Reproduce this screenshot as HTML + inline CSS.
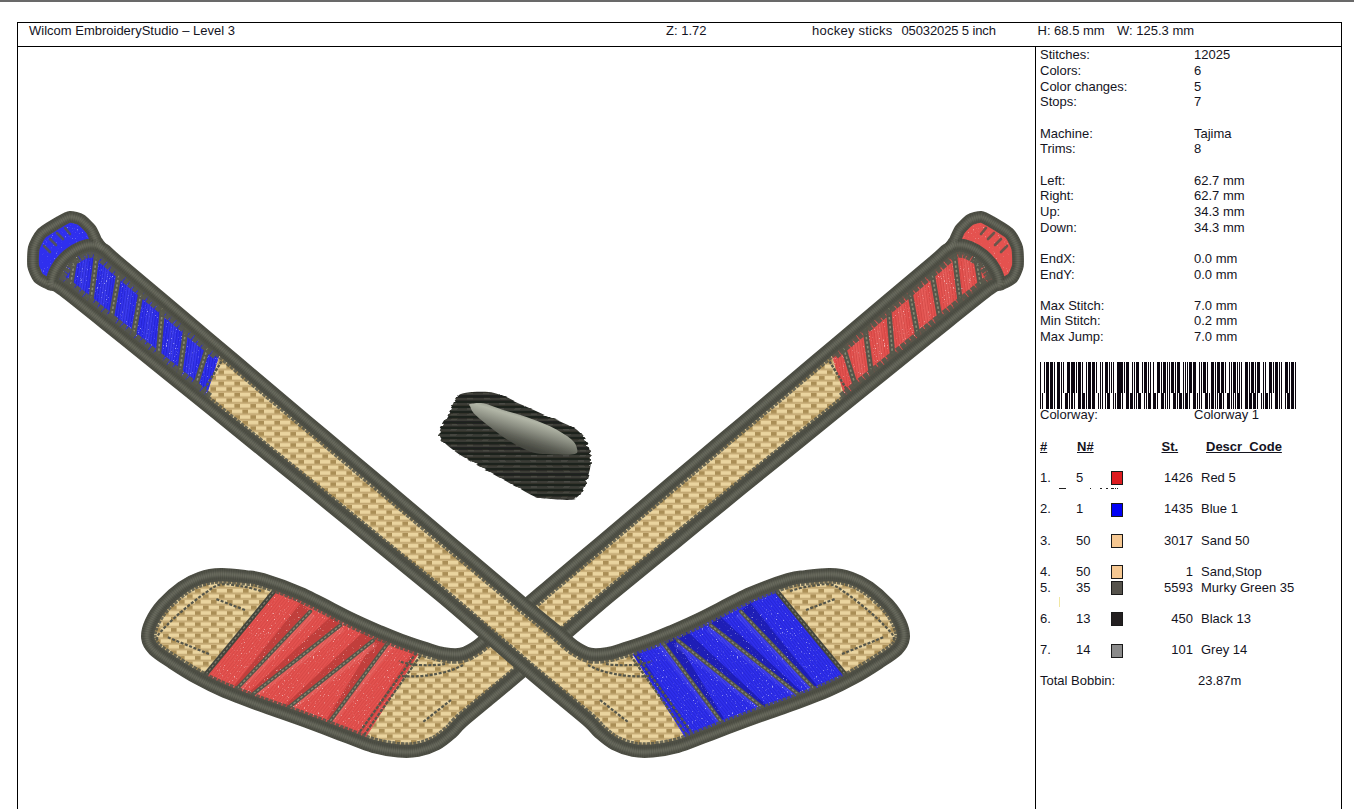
<!DOCTYPE html>
<html><head><meta charset="utf-8"><title>Wilcom EmbroideryStudio worksheet</title>
<style>
html,body{margin:0;padding:0;background:#fff}
body{width:1354px;height:809px;position:relative;overflow:hidden;font-family:"Liberation Sans",sans-serif;font-size:13px;color:#14141e}
.top{position:absolute;left:0;top:0;width:1354px;height:2px;background:#696969}
.ln{position:absolute;background:#000}
.t{position:absolute;white-space:pre;line-height:15px;height:15px}
.h{font-weight:bold;text-decoration:underline}
.sw{position:absolute;width:10px;height:12px;border:1px solid #1a1a1a}
.mk{position:absolute;height:1px;background:#222}
.design{position:absolute;left:17px;top:46px}
.bc{position:absolute;left:1040px;top:362px}
</style></head><body>
<div class="top"></div>
<div class="ln" style="left:17px;top:22px;width:1325px;height:1px"></div>
<div class="ln" style="left:17px;top:46px;width:1325px;height:1px"></div>
<div class="ln" style="left:17px;top:22px;width:1px;height:787px"></div>
<div class="ln" style="left:1341px;top:22px;width:1px;height:787px"></div>
<div class="ln" style="left:1035px;top:46px;width:1px;height:763px"></div>
<div class="t " style="left:29.0px;top:22.5px">Wilcom EmbroideryStudio – Level 3</div>
<div class="t " style="left:666.0px;top:22.5px">Z: 1.72</div>
<div class="t" style="left:812px;top:22.5px;letter-spacing:.24px">hockey sticks</div>
<div class="t" style="left:901.5px;top:22.5px;letter-spacing:-.12px">05032025 5 inch</div>
<div class="t " style="left:1037.5px;top:22.5px">H: 68.5 mm</div>
<div class="t " style="left:1117.0px;top:22.5px">W: 125.3 mm</div>
<svg class="design" width="1018" height="763" viewBox="17 46 1018 763">
<defs>
<pattern id="sand" width="16" height="11.2" patternUnits="userSpaceOnUse">
<rect width="16" height="11.2" fill="#ceb47e"/>
<rect x="0" y=".9" width="10.5" height="3.6" fill="#ead49f"/><rect x="10.5" y=".9" width="5.5" height="3.6" fill="#aa8e56"/>
<rect x="8" y="6.5" width="8" height="3.6" fill="#ead49f"/><rect x="0" y="6.5" width="2.5" height="3.6" fill="#ead49f"/><rect x="2.5" y="6.5" width="5.5" height="3.6" fill="#aa8e56"/>
<rect x="0" y="4.5" width="16" height="1" fill="#c0a56f"/><rect x="0" y="10.1" width="16" height="1" fill="#c0a56f"/>
</pattern>
<filter id="b1" x="-5%" y="-5%" width="110%" height="110%"><feGaussianBlur stdDeviation="1.3"/></filter>
<filter id="b2" x="-20%" y="-20%" width="140%" height="140%"><feGaussianBlur stdDeviation="2"/></filter>
<filter id="speck" x="0" y="0" width="100%" height="100%"><feTurbulence type="fractalNoise" baseFrequency="0.8 0.6" numOctaves="2" seed="4" result="n"/><feColorMatrix in="n" type="matrix" values="0 0 0 0 1  0 0 0 0 1  0 0 0 0 1  4 4 0 0 -4.9" result="m"/><feComposite in="m" in2="SourceGraphic" operator="in"/></filter>
<pattern id="stb" width="2.6" height="8" patternUnits="userSpaceOnUse" patternTransform="rotate(8)"><rect width="1.1" height="8" fill="#1a1ab4"/></pattern>
<pattern id="stbb" width="2.6" height="8" patternUnits="userSpaceOnUse" patternTransform="rotate(-38)"><rect width="1.1" height="8" fill="#1a1ab4"/></pattern>
<pattern id="str" width="2.6" height="8" patternUnits="userSpaceOnUse" patternTransform="rotate(8)"><rect width="1.1" height="8" fill="#c23c3a"/></pattern>
<pattern id="strb" width="2.6" height="8" patternUnits="userSpaceOnUse" patternTransform="rotate(-38)"><rect width="1.1" height="8" fill="#c23c3a"/></pattern>
<filter id="rough" x="-5%" y="-5%" width="110%" height="110%"><feTurbulence type="fractalNoise" baseFrequency="0.015 0.4" numOctaves="1" seed="3" result="t"/><feColorMatrix in="t" type="matrix" values="1 0 0 0 0  0 0 0 0 .5  0 0 0 0 0  0 0 0 0 1" result="t2"/><feDisplacementMap in="SourceGraphic" in2="t2" scale="7" xChannelSelector="R" yChannelSelector="G"/></filter>
<pattern id="pk2" width="16" height="5.2" patternUnits="userSpaceOnUse"><rect width="16" height="5.2" fill="#3a3b35"/><rect y="0" width="16" height="2.6" fill="#1f201c"/><rect x="3" y="2.6" width="6" height="1.4" fill="#4b4c45"/></pattern>
<linearGradient id="pk" gradientUnits="userSpaceOnUse" x1="531" y1="413" x2="521" y2="446"><stop offset="0" stop-color="#8a8e82"/><stop offset=".22" stop-color="#b2b6a7"/><stop offset=".5" stop-color="#8b8e82"/><stop offset=".8" stop-color="#5d5f56"/><stop offset="1" stop-color="#45473f"/></linearGradient>
<filter id="b0" x="-5%" y="-10%" width="110%" height="120%"><feGaussianBlur stdDeviation=".7"/></filter>
</defs>
<g transform="translate(1051,0) scale(-1,1)">
<g>
<clipPath id="clipr"><path d="M117.0 260.5C127.1 269.1 148.9 287.4 164.9 300.8C180.8 314.3 196.8 327.7 212.8 341.2C228.7 354.6 244.7 368.1 260.6 381.5C276.6 395.0 292.5 408.4 308.5 421.9C324.5 435.3 340.4 448.7 356.4 462.2C372.3 475.6 388.3 489.1 404.2 502.5C420.2 516.0 436.2 529.4 452.1 542.9C468.1 556.3 487.9 572.9 500.0 583.2C512.1 593.5 515.6 596.6 525.0 604.5C534.4 612.4 548.3 623.5 556.5 630.3C564.7 637.1 568.4 641.6 574.0 645.5C579.6 649.4 584.5 652.2 590.0 653.5C595.5 654.8 601.2 653.9 607.0 653.0C612.8 652.1 617.8 650.2 625.0 648.0C632.2 645.8 642.5 642.2 650.0 639.5C657.5 636.8 661.7 635.1 670.0 631.5C678.3 627.9 686.7 624.4 700.0 618.0C713.3 611.6 735.3 599.5 750.0 593.0C764.7 586.5 778.8 581.8 788.0 579.0C797.2 576.2 798.0 576.8 805.0 576.0C812.0 575.2 822.3 573.8 830.0 574.0C837.7 574.2 844.4 575.3 851.0 577.5C857.6 579.7 863.2 582.6 869.5 587.0C875.8 591.4 883.3 598.2 888.5 604.0C893.7 609.8 897.9 616.3 900.5 622.0C903.1 627.7 904.5 633.3 904.0 638.0C903.5 642.7 901.7 645.8 897.5 650.0C893.3 654.2 886.3 658.4 879.0 663.2C871.7 668.0 862.2 674.0 853.8 678.6C845.4 683.2 839.1 686.5 828.6 691.0C818.1 695.5 801.5 701.7 790.5 705.8C779.5 709.9 772.7 711.9 762.3 715.6C751.9 719.4 737.9 724.6 728.0 728.3C718.1 732.0 711.3 734.7 703.0 737.8C694.7 740.9 686.4 744.7 678.0 747.0C669.6 749.3 660.0 750.9 652.5 751.6C645.0 752.3 639.4 752.2 633.0 751.0C626.6 749.8 619.7 747.3 614.0 744.3C608.3 741.3 603.2 736.6 599.0 733.0C594.8 729.4 595.2 728.0 589.0 722.5C582.8 717.0 571.0 707.5 562.0 700.0C553.0 692.5 547.4 688.0 535.0 677.5C522.6 667.0 503.3 650.4 487.5 636.8C471.7 623.2 458.8 611.6 440.0 596.0C421.2 580.4 396.7 560.6 375.0 542.9C353.3 525.2 331.2 507.0 310.0 489.8C288.8 472.6 268.7 456.3 248.0 439.6C227.3 422.9 206.7 406.1 186.0 389.4C165.3 372.7 144.4 355.8 124.0 339.4C103.5 323.0 75.3 300.2 63.3 290.9C51.3 281.6 53.2 287.2 52.0 283.5C50.8 279.8 53.6 273.3 56.2 268.5C58.9 263.7 63.7 258.3 67.9 254.7C72.1 251.1 77.2 248.4 81.4 246.7C85.6 245.0 89.2 244.1 93.0 244.5C96.8 244.9 100.0 246.5 104.0 249.2C108.0 251.9 106.9 251.9 117.0 260.5Z"/></clipPath>
<clipPath id="ccapr"><path d="M50.0 284.5C48.9 283.9 40.2 279.9 38.5 278.0C36.8 276.1 33.7 269.0 33.2 266.0C32.7 263.0 33.0 251.2 33.8 248.0C34.6 244.8 38.9 236.2 41.5 233.5C44.1 230.8 57.1 223.2 60.0 221.5C62.9 219.8 67.9 217.0 70.0 216.8C72.1 216.6 78.9 218.5 81.0 219.8C83.1 221.1 89.5 227.5 91.0 229.5C92.5 231.5 95.0 238.2 96.0 240.0C97.0 241.8 100.5 246.3 101.0 247.0Z"/></clipPath>
<path d="M117.0 260.5C127.1 269.1 148.9 287.4 164.9 300.8C180.8 314.3 196.8 327.7 212.8 341.2C228.7 354.6 244.7 368.1 260.6 381.5C276.6 395.0 292.5 408.4 308.5 421.9C324.5 435.3 340.4 448.7 356.4 462.2C372.3 475.6 388.3 489.1 404.2 502.5C420.2 516.0 436.2 529.4 452.1 542.9C468.1 556.3 487.9 572.9 500.0 583.2C512.1 593.5 515.6 596.6 525.0 604.5C534.4 612.4 548.3 623.5 556.5 630.3C564.7 637.1 568.4 641.6 574.0 645.5C579.6 649.4 584.5 652.2 590.0 653.5C595.5 654.8 601.2 653.9 607.0 653.0C612.8 652.1 617.8 650.2 625.0 648.0C632.2 645.8 642.5 642.2 650.0 639.5C657.5 636.8 661.7 635.1 670.0 631.5C678.3 627.9 686.7 624.4 700.0 618.0C713.3 611.6 735.3 599.5 750.0 593.0C764.7 586.5 778.8 581.8 788.0 579.0C797.2 576.2 798.0 576.8 805.0 576.0C812.0 575.2 822.3 573.8 830.0 574.0C837.7 574.2 844.4 575.3 851.0 577.5C857.6 579.7 863.2 582.6 869.5 587.0C875.8 591.4 883.3 598.2 888.5 604.0C893.7 609.8 897.9 616.3 900.5 622.0C903.1 627.7 904.5 633.3 904.0 638.0C903.5 642.7 901.7 645.8 897.5 650.0C893.3 654.2 886.3 658.4 879.0 663.2C871.7 668.0 862.2 674.0 853.8 678.6C845.4 683.2 839.1 686.5 828.6 691.0C818.1 695.5 801.5 701.7 790.5 705.8C779.5 709.9 772.7 711.9 762.3 715.6C751.9 719.4 737.9 724.6 728.0 728.3C718.1 732.0 711.3 734.7 703.0 737.8C694.7 740.9 686.4 744.7 678.0 747.0C669.6 749.3 660.0 750.9 652.5 751.6C645.0 752.3 639.4 752.2 633.0 751.0C626.6 749.8 619.7 747.3 614.0 744.3C608.3 741.3 603.2 736.6 599.0 733.0C594.8 729.4 595.2 728.0 589.0 722.5C582.8 717.0 571.0 707.5 562.0 700.0C553.0 692.5 547.4 688.0 535.0 677.5C522.6 667.0 503.3 650.4 487.5 636.8C471.7 623.2 458.8 611.6 440.0 596.0C421.2 580.4 396.7 560.6 375.0 542.9C353.3 525.2 331.2 507.0 310.0 489.8C288.8 472.6 268.7 456.3 248.0 439.6C227.3 422.9 206.7 406.1 186.0 389.4C165.3 372.7 144.4 355.8 124.0 339.4C103.5 323.0 75.3 300.2 63.3 290.9C51.3 281.6 53.2 287.2 52.0 283.5C50.8 279.8 53.6 273.3 56.2 268.5C58.9 263.7 63.7 258.3 67.9 254.7C72.1 251.1 77.2 248.4 81.4 246.7C85.6 245.0 89.2 244.1 93.0 244.5C96.8 244.9 100.0 246.5 104.0 249.2C108.0 251.9 106.9 251.9 117.0 260.5Z" fill="url(#sand)"/>
<path d="M50.0 284.5C48.9 283.9 40.2 279.9 38.5 278.0C36.8 276.1 33.7 269.0 33.2 266.0C32.7 263.0 33.0 251.2 33.8 248.0C34.6 244.8 38.9 236.2 41.5 233.5C44.1 230.8 57.1 223.2 60.0 221.5C62.9 219.8 67.9 217.0 70.0 216.8C72.1 216.6 78.9 218.5 81.0 219.8C83.1 221.1 89.5 227.5 91.0 229.5C92.5 231.5 95.0 238.2 96.0 240.0C97.0 241.8 100.5 246.3 101.0 247.0Z" fill="#e4524f"/>
<g clip-path="url(#clipr)">
<path d="M52.0 283.5L56.2 268.5L67.9 254.7L81.4 246.7L93.0 244.5L104.0 249.2L117.0 260.5L221.5 348.5L203.9 404.0L63.3 290.9Z" fill="#e4524f"/>
<path d="M632.7 654.2L650.0 639.5L670.0 631.5L700.0 618.0L750.0 593.0L770.9 584.0L847.5 679.0L828.6 691.0L790.5 705.8L762.3 715.6L728.0 728.3L703.0 737.8L688.0 742.0Z" fill="#e4524f"/>
<path d="M86.2 253.5L80.5 294.0" stroke="#f07a76" stroke-width="7" opacity=".35" fill="none" filter="url(#b2)"/>
<path d="M108.2 261.5L101.2 308.0" stroke="#f07a76" stroke-width="7" opacity=".35" fill="none" filter="url(#b2)"/>
<path d="M130.5 280.5L122.5 325.0" stroke="#f07a76" stroke-width="7" opacity=".35" fill="none" filter="url(#b2)"/>
<path d="M152.0 299.0L146.0 344.0" stroke="#f07a76" stroke-width="7" opacity=".35" fill="none" filter="url(#b2)"/>
<path d="M174.2 318.0L169.2 362.5" stroke="#f07a76" stroke-width="7" opacity=".35" fill="none" filter="url(#b2)"/>
<path d="M196.8 338.0L188.0 377.5" stroke="#f07a76" stroke-width="7" opacity=".35" fill="none" filter="url(#b2)"/>
<path d="M662.9 642.9L720.7 720.8L723.9 718.4L673.3 635.2Z" fill="#b83a38" opacity=".8" filter="url(#b0)"/>
<path d="M662.9 642.9L720.7 720.8L716.7 723.8L657.3 647.1Z" fill="#f07a76" opacity=".45" filter="url(#b0)"/>
<path d="M677.9 640.4L763.4 708.2L765.9 705.1L686.0 630.2Z" fill="#b83a38" opacity=".8" filter="url(#b0)"/>
<path d="M677.9 640.4L763.4 708.2L760.3 712.1L673.6 645.9Z" fill="#f07a76" opacity=".45" filter="url(#b0)"/>
<path d="M710.6 625.3L798.5 694.4L801.0 691.3L718.6 615.1Z" fill="#b83a38" opacity=".8" filter="url(#b0)"/>
<path d="M710.6 625.3L798.5 694.4L795.4 698.3L706.3 630.8Z" fill="#f07a76" opacity=".45" filter="url(#b0)"/>
<path d="M740.8 611.5L813.6 688.1L816.5 685.3L750.2 602.5Z" fill="#b83a38" opacity=".8" filter="url(#b0)"/>
<path d="M740.8 611.5L813.6 688.1L810.0 691.5L735.7 616.3Z" fill="#f07a76" opacity=".45" filter="url(#b0)"/>
<path d="M632.7 654.2L688.0 731.0L689.6 729.8L637.6 650.7Z" fill="#b83a38" opacity=".5"/>
<path d="M52.0 283.5L56.2 268.5L67.9 254.7L81.4 246.7L93.0 244.5L104.0 249.2L117.0 260.5L221.5 348.5L203.9 404.0L63.3 290.9Z" fill="url(#str)" opacity=".5"/>
<path d="M632.7 654.2L650.0 639.5L670.0 631.5L700.0 618.0L750.0 593.0L770.9 584.0L847.5 679.0L828.6 691.0L790.5 705.8L762.3 715.6L728.0 728.3L703.0 737.8L688.0 742.0Z" fill="url(#strb)" opacity=".4"/>
<path d="M52.0 283.5L56.2 268.5L67.9 254.7L81.4 246.7L93.0 244.5L104.0 249.2L117.0 260.5L221.5 348.5L203.9 404.0L63.3 290.9Z" fill="#fff" filter="url(#speck)" opacity=".55"/>
<path d="M632.7 654.2L650.0 639.5L670.0 631.5L700.0 618.0L750.0 593.0L770.9 584.0L847.5 679.0L828.6 691.0L790.5 705.8L762.3 715.6L728.0 728.3L703.0 737.8L688.0 742.0Z" fill="#fff" filter="url(#speck)" opacity=".55"/>
<g stroke="#55564a" stroke-width="3.2" fill="none" stroke-linecap="round">
<path d="M75.5 255L70 288" stroke-width="5.4"/>
<path d="M75.5 255L70 288" stroke-width="1.6" stroke="#8a8b74" stroke-dasharray="2.5 2" stroke-linecap="butt"/>
<path d="M97 252L91 300" stroke-width="5.4"/>
<path d="M97 252L91 300" stroke-width="1.6" stroke="#8a8b74" stroke-dasharray="2.5 2" stroke-linecap="butt"/>
<path d="M119.5 271L111.5 316" stroke-width="5.4"/>
<path d="M119.5 271L111.5 316" stroke-width="1.6" stroke="#8a8b74" stroke-dasharray="2.5 2" stroke-linecap="butt"/>
<path d="M141.5 290L133.5 334" stroke-width="5.4"/>
<path d="M141.5 290L133.5 334" stroke-width="1.6" stroke="#8a8b74" stroke-dasharray="2.5 2" stroke-linecap="butt"/>
<path d="M162.5 308L158.5 354" stroke-width="5.4"/>
<path d="M162.5 308L158.5 354" stroke-width="1.6" stroke="#8a8b74" stroke-dasharray="2.5 2" stroke-linecap="butt"/>
<path d="M186 328L180 371" stroke-width="5.4"/>
<path d="M186 328L180 371" stroke-width="1.6" stroke="#8a8b74" stroke-dasharray="2.5 2" stroke-linecap="butt"/>
<path d="M207.5 348L196 384" stroke-width="5.4"/>
<path d="M207.5 348L196 384" stroke-width="1.6" stroke="#8a8b74" stroke-dasharray="2.5 2" stroke-linecap="butt"/>
<path d="M662.9 642.9L720.7 720.8" stroke-width="3.8"/>
<path d="M662.9 642.9L720.7 720.8" stroke-width="1.3" stroke="#8a8b74" stroke-dasharray="2.5 2" stroke-linecap="butt"/>
<path d="M677.9 640.4L763.4 708.2" stroke-width="3.8"/>
<path d="M677.9 640.4L763.4 708.2" stroke-width="1.3" stroke="#8a8b74" stroke-dasharray="2.5 2" stroke-linecap="butt"/>
<path d="M710.6 625.3L798.5 694.4" stroke-width="3.8"/>
<path d="M710.6 625.3L798.5 694.4" stroke-width="1.3" stroke="#8a8b74" stroke-dasharray="2.5 2" stroke-linecap="butt"/>
<path d="M740.8 611.5L813.6 688.1" stroke-width="3.8"/>
<path d="M740.8 611.5L813.6 688.1" stroke-width="1.3" stroke="#8a8b74" stroke-dasharray="2.5 2" stroke-linecap="butt"/>
<path d="M221.5 361.3L203.9 390.2" stroke-width="2.4" stroke-dasharray="3 1.2" stroke-linecap="butt"/>
<path d="M777.5 592L845 674" stroke-width="4.6" stroke="#45463d"/>
<path d="M777.5 592L845 674" stroke-width="1.2" stroke="#7d7e70" stroke-dasharray="2.5 2" stroke-linecap="butt"/>
<path d="M630.5 655.5L687 735" stroke-width="2.2" stroke-dasharray="3.5 1.2" stroke-linecap="butt"/>
<path d="M634.5 652.5L692 733" stroke-width="2.2" stroke-dasharray="3.5 1.2" stroke-linecap="butt"/>
<path d="M790.0 591.0C793.0 590.2 801.3 587.6 808.0 586.5C814.7 585.4 824.0 583.5 830.2 584.5C836.4 585.5 839.0 588.3 845.3 592.6C851.6 596.9 861.4 604.8 867.9 610.2C874.4 615.7 880.0 621.1 884.2 625.3C888.4 629.5 891.4 632.7 893.0 635.3C894.6 637.9 893.5 640.0 893.6 641.0" stroke-width="2.2" stroke-dasharray="3 1.6" stroke-linecap="butt"/>
<path d="M806 610L835 599" stroke-width="2.2" stroke-dasharray="3 1.6" stroke-linecap="butt"/>
<path d="M842 654L884 637" stroke-width="2.2" stroke-dasharray="3 1.6" stroke-linecap="butt"/>
<path d="M588 665C600 672 625 678 650 676" stroke-width="2.2" stroke-dasharray="3 1.6" stroke-linecap="butt"/>
<path d="M600 700L628 722" stroke-width="2.2" stroke-dasharray="3 1.6" stroke-linecap="butt"/>
<path d="M606 664C620 666 640 666 652 661" stroke-width="2.2" stroke-dasharray="3 1.6" stroke-linecap="butt"/>
</g>
<path d="M203.9 404.0C187.0 390.4 81.5 305.4 63.3 290.9C45.1 276.4 52.9 286.2 52.0 283.5C51.1 280.8 54.3 272.0 56.2 268.5C58.1 265.0 64.9 257.3 67.9 254.7C70.9 252.1 78.4 247.9 81.4 246.7C84.4 245.5 90.3 244.2 93.0 244.5C95.7 244.8 101.1 247.3 104.0 249.2C106.9 251.1 102.9 248.6 117.0 260.5C131.1 272.4 209.0 337.9 221.5 348.5" fill="none" stroke="#57584c" stroke-width="26" stroke-dasharray="5 1" opacity=".95"/>
<path d="M117.0 260.5C127.1 269.1 148.9 287.4 164.9 300.8C180.8 314.3 196.8 327.7 212.8 341.2C228.7 354.6 244.7 368.1 260.6 381.5C276.6 395.0 292.5 408.4 308.5 421.9C324.5 435.3 340.4 448.7 356.4 462.2C372.3 475.6 388.3 489.1 404.2 502.5C420.2 516.0 436.2 529.4 452.1 542.9C468.1 556.3 487.9 572.9 500.0 583.2C512.1 593.5 515.6 596.6 525.0 604.5C534.4 612.4 548.3 623.5 556.5 630.3C564.7 637.1 568.4 641.6 574.0 645.5C579.6 649.4 584.5 652.2 590.0 653.5C595.5 654.8 601.2 653.9 607.0 653.0C612.8 652.1 617.8 650.2 625.0 648.0C632.2 645.8 642.5 642.2 650.0 639.5C657.5 636.8 661.7 635.1 670.0 631.5C678.3 627.9 686.7 624.4 700.0 618.0C713.3 611.6 735.3 599.5 750.0 593.0C764.7 586.5 778.8 581.8 788.0 579.0C797.2 576.2 798.0 576.8 805.0 576.0C812.0 575.2 822.3 573.8 830.0 574.0C837.7 574.2 844.4 575.3 851.0 577.5C857.6 579.7 863.2 582.6 869.5 587.0C875.8 591.4 883.3 598.2 888.5 604.0C893.7 609.8 897.9 616.3 900.5 622.0C903.1 627.7 904.5 633.3 904.0 638.0C903.5 642.7 901.7 645.8 897.5 650.0C893.3 654.2 886.3 658.4 879.0 663.2C871.7 668.0 862.2 674.0 853.8 678.6C845.4 683.2 839.1 686.5 828.6 691.0C818.1 695.5 801.5 701.7 790.5 705.8C779.5 709.9 772.7 711.9 762.3 715.6C751.9 719.4 737.9 724.6 728.0 728.3C718.1 732.0 711.3 734.7 703.0 737.8C694.7 740.9 686.4 744.7 678.0 747.0C669.6 749.3 660.0 750.9 652.5 751.6C645.0 752.3 639.4 752.2 633.0 751.0C626.6 749.8 619.7 747.3 614.0 744.3C608.3 741.3 603.2 736.6 599.0 733.0C594.8 729.4 595.2 728.0 589.0 722.5C582.8 717.0 571.0 707.5 562.0 700.0C553.0 692.5 547.4 688.0 535.0 677.5C522.6 667.0 503.3 650.4 487.5 636.8C471.7 623.2 458.8 611.6 440.0 596.0C421.2 580.4 396.7 560.6 375.0 542.9C353.3 525.2 331.2 507.0 310.0 489.8C288.8 472.6 268.7 456.3 248.0 439.6C227.3 422.9 206.7 406.1 186.0 389.4C165.3 372.7 144.4 355.8 124.0 339.4C103.5 323.0 75.3 300.2 63.3 290.9C51.3 281.6 53.2 287.2 52.0 283.5C50.8 279.8 53.6 273.3 56.2 268.5C58.9 263.7 63.7 258.3 67.9 254.7C72.1 251.1 77.2 248.4 81.4 246.7C85.6 245.0 89.2 244.1 93.0 244.5C96.8 244.9 100.0 246.5 104.0 249.2C108.0 251.9 106.9 251.9 117.0 260.5Z" fill="none" stroke="#55564a" stroke-width="19.4" stroke-dasharray="3.6 1.1" opacity=".85"/>
<path d="M117.0 260.5C127.1 269.1 148.9 287.4 164.9 300.8C180.8 314.3 196.8 327.7 212.8 341.2C228.7 354.6 244.7 368.1 260.6 381.5C276.6 395.0 292.5 408.4 308.5 421.9C324.5 435.3 340.4 448.7 356.4 462.2C372.3 475.6 388.3 489.1 404.2 502.5C420.2 516.0 436.2 529.4 452.1 542.9C468.1 556.3 487.9 572.9 500.0 583.2C512.1 593.5 515.6 596.6 525.0 604.5C534.4 612.4 548.3 623.5 556.5 630.3C564.7 637.1 568.4 641.6 574.0 645.5C579.6 649.4 584.5 652.2 590.0 653.5C595.5 654.8 601.2 653.9 607.0 653.0C612.8 652.1 617.8 650.2 625.0 648.0C632.2 645.8 642.5 642.2 650.0 639.5C657.5 636.8 661.7 635.1 670.0 631.5C678.3 627.9 686.7 624.4 700.0 618.0C713.3 611.6 735.3 599.5 750.0 593.0C764.7 586.5 778.8 581.8 788.0 579.0C797.2 576.2 798.0 576.8 805.0 576.0C812.0 575.2 822.3 573.8 830.0 574.0C837.7 574.2 844.4 575.3 851.0 577.5C857.6 579.7 863.2 582.6 869.5 587.0C875.8 591.4 883.3 598.2 888.5 604.0C893.7 609.8 897.9 616.3 900.5 622.0C903.1 627.7 904.5 633.3 904.0 638.0C903.5 642.7 901.7 645.8 897.5 650.0C893.3 654.2 886.3 658.4 879.0 663.2C871.7 668.0 862.2 674.0 853.8 678.6C845.4 683.2 839.1 686.5 828.6 691.0C818.1 695.5 801.5 701.7 790.5 705.8C779.5 709.9 772.7 711.9 762.3 715.6C751.9 719.4 737.9 724.6 728.0 728.3C718.1 732.0 711.3 734.7 703.0 737.8C694.7 740.9 686.4 744.7 678.0 747.0C669.6 749.3 660.0 750.9 652.5 751.6C645.0 752.3 639.4 752.2 633.0 751.0C626.6 749.8 619.7 747.3 614.0 744.3C608.3 741.3 603.2 736.6 599.0 733.0C594.8 729.4 595.2 728.0 589.0 722.5C582.8 717.0 571.0 707.5 562.0 700.0C553.0 692.5 547.4 688.0 535.0 677.5C522.6 667.0 503.3 650.4 487.5 636.8C471.7 623.2 458.8 611.6 440.0 596.0C421.2 580.4 396.7 560.6 375.0 542.9C353.3 525.2 331.2 507.0 310.0 489.8C288.8 472.6 268.7 456.3 248.0 439.6C227.3 422.9 206.7 406.1 186.0 389.4C165.3 372.7 144.4 355.8 124.0 339.4C103.5 323.0 75.3 300.2 63.3 290.9C51.3 281.6 53.2 287.2 52.0 283.5C50.8 279.8 53.6 273.3 56.2 268.5C58.9 263.7 63.7 258.3 67.9 254.7C72.1 251.1 77.2 248.4 81.4 246.7C85.6 245.0 89.2 244.1 93.0 244.5C96.8 244.9 100.0 246.5 104.0 249.2C108.0 251.9 106.9 251.9 117.0 260.5Z" fill="none" stroke="#4f5046" stroke-width="14.4"/>
<path d="M212.0 411.5C218.0 416.2 231.7 426.6 248.0 439.6C264.3 452.7 288.8 472.6 310.0 489.8C331.2 507.0 353.3 525.2 375.0 542.9C396.7 560.6 421.2 580.4 440.0 596.0C458.8 611.6 471.7 623.2 487.5 636.8C503.3 650.4 522.6 667.0 535.0 677.5C547.4 688.0 553.0 692.5 562.0 700.0C571.0 707.5 584.5 718.8 589.0 722.5" fill="none" stroke="#4f5046" stroke-width="15.8"/>
</g>
<g clip-path="url(#ccapr)"><path d="M50.0 284.5C48.9 283.9 40.2 279.9 38.5 278.0C36.8 276.1 33.7 269.0 33.2 266.0C32.7 263.0 33.0 251.2 33.8 248.0C34.6 244.8 38.9 236.2 41.5 233.5C44.1 230.8 57.1 223.2 60.0 221.5C62.9 219.8 67.9 217.0 70.0 216.8C72.1 216.6 78.9 218.5 81.0 219.8C83.1 221.1 89.5 227.5 91.0 229.5C92.5 231.5 95.0 238.2 96.0 240.0C97.0 241.8 100.5 246.3 101.0 247.0Z" fill="#fff" filter="url(#speck)" opacity=".4"/>
<path d="M44 246L50 252M50 239L56 245M57 233L63 239M65 228L70 234" stroke="#55564a" stroke-width="2.6" stroke-linecap="round" opacity=".85"/></g>
<path d="M50.0 284.5C48.9 283.9 40.2 279.9 38.5 278.0C36.8 276.1 33.7 269.0 33.2 266.0C32.7 263.0 33.0 251.2 33.8 248.0C34.6 244.8 38.9 236.2 41.5 233.5C44.1 230.8 57.1 223.2 60.0 221.5C62.9 219.8 67.9 217.0 70.0 216.8C72.1 216.6 78.9 218.5 81.0 219.8C83.1 221.1 89.5 227.5 91.0 229.5C92.5 231.5 95.0 238.2 96.0 240.0C97.0 241.8 100.5 246.3 101.0 247.0" fill="none" stroke="#4f5046" stroke-width="11.8" stroke-linejoin="round" stroke-linecap="round"/>
<path d="M117.0 260.5C127.1 269.1 148.9 287.4 164.9 300.8C180.8 314.3 196.8 327.7 212.8 341.2C228.7 354.6 244.7 368.1 260.6 381.5C276.6 395.0 292.5 408.4 308.5 421.9C324.5 435.3 340.4 448.7 356.4 462.2C372.3 475.6 388.3 489.1 404.2 502.5C420.2 516.0 436.2 529.4 452.1 542.9C468.1 556.3 487.9 572.9 500.0 583.2C512.1 593.5 515.6 596.6 525.0 604.5C534.4 612.4 548.3 623.5 556.5 630.3C564.7 637.1 568.4 641.6 574.0 645.5C579.6 649.4 584.5 652.2 590.0 653.5C595.5 654.8 601.2 653.9 607.0 653.0C612.8 652.1 617.8 650.2 625.0 648.0C632.2 645.8 642.5 642.2 650.0 639.5C657.5 636.8 661.7 635.1 670.0 631.5C678.3 627.9 686.7 624.4 700.0 618.0C713.3 611.6 735.3 599.5 750.0 593.0C764.7 586.5 778.8 581.8 788.0 579.0C797.2 576.2 798.0 576.8 805.0 576.0C812.0 575.2 822.3 573.8 830.0 574.0C837.7 574.2 844.4 575.3 851.0 577.5C857.6 579.7 863.2 582.6 869.5 587.0C875.8 591.4 883.3 598.2 888.5 604.0C893.7 609.8 897.9 616.3 900.5 622.0C903.1 627.7 904.5 633.3 904.0 638.0C903.5 642.7 901.7 645.8 897.5 650.0C893.3 654.2 886.3 658.4 879.0 663.2C871.7 668.0 862.2 674.0 853.8 678.6C845.4 683.2 839.1 686.5 828.6 691.0C818.1 695.5 801.5 701.7 790.5 705.8C779.5 709.9 772.7 711.9 762.3 715.6C751.9 719.4 737.9 724.6 728.0 728.3C718.1 732.0 711.3 734.7 703.0 737.8C694.7 740.9 686.4 744.7 678.0 747.0C669.6 749.3 660.0 750.9 652.5 751.6C645.0 752.3 639.4 752.2 633.0 751.0C626.6 749.8 619.7 747.3 614.0 744.3C608.3 741.3 603.2 736.6 599.0 733.0C594.8 729.4 595.2 728.0 589.0 722.5C582.8 717.0 571.0 707.5 562.0 700.0C553.0 692.5 547.4 688.0 535.0 677.5C522.6 667.0 503.3 650.4 487.5 636.8C471.7 623.2 458.8 611.6 440.0 596.0C421.2 580.4 396.7 560.6 375.0 542.9C353.3 525.2 331.2 507.0 310.0 489.8C288.8 472.6 268.7 456.3 248.0 439.6C227.3 422.9 206.7 406.1 186.0 389.4C165.3 372.7 144.4 355.8 124.0 339.4C103.5 323.0 75.3 300.2 63.3 290.9C51.3 281.6 53.2 287.2 52.0 283.5C50.8 279.8 53.6 273.3 56.2 268.5C58.9 263.7 63.7 258.3 67.9 254.7C72.1 251.1 77.2 248.4 81.4 246.7C85.6 245.0 89.2 244.1 93.0 244.5C96.8 244.9 100.0 246.5 104.0 249.2C108.0 251.9 106.9 251.9 117.0 260.5Z" fill="none" stroke="#4f5046" stroke-width="11.8" stroke-linejoin="round" stroke-linecap="round"/>
<path d="M50.0 284.5C48.9 283.9 40.2 279.9 38.5 278.0C36.8 276.1 33.7 269.0 33.2 266.0C32.7 263.0 33.0 251.2 33.8 248.0C34.6 244.8 38.9 236.2 41.5 233.5C44.1 230.8 57.1 223.2 60.0 221.5C62.9 219.8 67.9 217.0 70.0 216.8C72.1 216.6 78.9 218.5 81.0 219.8C83.1 221.1 89.5 227.5 91.0 229.5C92.5 231.5 95.0 238.2 96.0 240.0C97.0 241.8 100.5 246.3 101.0 247.0" fill="none" stroke="#737468" stroke-width="4.5" stroke-linejoin="round" stroke-linecap="round" opacity=".75" filter="url(#b1)"/>
<path d="M50.0 284.5C48.9 283.9 40.2 279.9 38.5 278.0C36.8 276.1 33.7 269.0 33.2 266.0C32.7 263.0 33.0 251.2 33.8 248.0C34.6 244.8 38.9 236.2 41.5 233.5C44.1 230.8 57.1 223.2 60.0 221.5C62.9 219.8 67.9 217.0 70.0 216.8C72.1 216.6 78.9 218.5 81.0 219.8C83.1 221.1 89.5 227.5 91.0 229.5C92.5 231.5 95.0 238.2 96.0 240.0C97.0 241.8 100.5 246.3 101.0 247.0" fill="none" stroke="#2f3029" stroke-width="10.8" stroke-dasharray=".8 1.4" opacity=".22"/>
<path d="M117.0 260.5C127.1 269.1 148.9 287.4 164.9 300.8C180.8 314.3 196.8 327.7 212.8 341.2C228.7 354.6 244.7 368.1 260.6 381.5C276.6 395.0 292.5 408.4 308.5 421.9C324.5 435.3 340.4 448.7 356.4 462.2C372.3 475.6 388.3 489.1 404.2 502.5C420.2 516.0 436.2 529.4 452.1 542.9C468.1 556.3 487.9 572.9 500.0 583.2C512.1 593.5 515.6 596.6 525.0 604.5C534.4 612.4 548.3 623.5 556.5 630.3C564.7 637.1 568.4 641.6 574.0 645.5C579.6 649.4 584.5 652.2 590.0 653.5C595.5 654.8 601.2 653.9 607.0 653.0C612.8 652.1 617.8 650.2 625.0 648.0C632.2 645.8 642.5 642.2 650.0 639.5C657.5 636.8 661.7 635.1 670.0 631.5C678.3 627.9 686.7 624.4 700.0 618.0C713.3 611.6 735.3 599.5 750.0 593.0C764.7 586.5 778.8 581.8 788.0 579.0C797.2 576.2 798.0 576.8 805.0 576.0C812.0 575.2 822.3 573.8 830.0 574.0C837.7 574.2 844.4 575.3 851.0 577.5C857.6 579.7 863.2 582.6 869.5 587.0C875.8 591.4 883.3 598.2 888.5 604.0C893.7 609.8 897.9 616.3 900.5 622.0C903.1 627.7 904.5 633.3 904.0 638.0C903.5 642.7 901.7 645.8 897.5 650.0C893.3 654.2 886.3 658.4 879.0 663.2C871.7 668.0 862.2 674.0 853.8 678.6C845.4 683.2 839.1 686.5 828.6 691.0C818.1 695.5 801.5 701.7 790.5 705.8C779.5 709.9 772.7 711.9 762.3 715.6C751.9 719.4 737.9 724.6 728.0 728.3C718.1 732.0 711.3 734.7 703.0 737.8C694.7 740.9 686.4 744.7 678.0 747.0C669.6 749.3 660.0 750.9 652.5 751.6C645.0 752.3 639.4 752.2 633.0 751.0C626.6 749.8 619.7 747.3 614.0 744.3C608.3 741.3 603.2 736.6 599.0 733.0C594.8 729.4 595.2 728.0 589.0 722.5C582.8 717.0 571.0 707.5 562.0 700.0C553.0 692.5 547.4 688.0 535.0 677.5C522.6 667.0 503.3 650.4 487.5 636.8C471.7 623.2 458.8 611.6 440.0 596.0C421.2 580.4 396.7 560.6 375.0 542.9C353.3 525.2 331.2 507.0 310.0 489.8C288.8 472.6 268.7 456.3 248.0 439.6C227.3 422.9 206.7 406.1 186.0 389.4C165.3 372.7 144.4 355.8 124.0 339.4C103.5 323.0 75.3 300.2 63.3 290.9C51.3 281.6 53.2 287.2 52.0 283.5C50.8 279.8 53.6 273.3 56.2 268.5C58.9 263.7 63.7 258.3 67.9 254.7C72.1 251.1 77.2 248.4 81.4 246.7C85.6 245.0 89.2 244.1 93.0 244.5C96.8 244.9 100.0 246.5 104.0 249.2C108.0 251.9 106.9 251.9 117.0 260.5Z" fill="none" stroke="#737468" stroke-width="4.5" stroke-linejoin="round" stroke-linecap="round" opacity=".75" filter="url(#b1)"/>
<path d="M117.0 260.5C127.1 269.1 148.9 287.4 164.9 300.8C180.8 314.3 196.8 327.7 212.8 341.2C228.7 354.6 244.7 368.1 260.6 381.5C276.6 395.0 292.5 408.4 308.5 421.9C324.5 435.3 340.4 448.7 356.4 462.2C372.3 475.6 388.3 489.1 404.2 502.5C420.2 516.0 436.2 529.4 452.1 542.9C468.1 556.3 487.9 572.9 500.0 583.2C512.1 593.5 515.6 596.6 525.0 604.5C534.4 612.4 548.3 623.5 556.5 630.3C564.7 637.1 568.4 641.6 574.0 645.5C579.6 649.4 584.5 652.2 590.0 653.5C595.5 654.8 601.2 653.9 607.0 653.0C612.8 652.1 617.8 650.2 625.0 648.0C632.2 645.8 642.5 642.2 650.0 639.5C657.5 636.8 661.7 635.1 670.0 631.5C678.3 627.9 686.7 624.4 700.0 618.0C713.3 611.6 735.3 599.5 750.0 593.0C764.7 586.5 778.8 581.8 788.0 579.0C797.2 576.2 798.0 576.8 805.0 576.0C812.0 575.2 822.3 573.8 830.0 574.0C837.7 574.2 844.4 575.3 851.0 577.5C857.6 579.7 863.2 582.6 869.5 587.0C875.8 591.4 883.3 598.2 888.5 604.0C893.7 609.8 897.9 616.3 900.5 622.0C903.1 627.7 904.5 633.3 904.0 638.0C903.5 642.7 901.7 645.8 897.5 650.0C893.3 654.2 886.3 658.4 879.0 663.2C871.7 668.0 862.2 674.0 853.8 678.6C845.4 683.2 839.1 686.5 828.6 691.0C818.1 695.5 801.5 701.7 790.5 705.8C779.5 709.9 772.7 711.9 762.3 715.6C751.9 719.4 737.9 724.6 728.0 728.3C718.1 732.0 711.3 734.7 703.0 737.8C694.7 740.9 686.4 744.7 678.0 747.0C669.6 749.3 660.0 750.9 652.5 751.6C645.0 752.3 639.4 752.2 633.0 751.0C626.6 749.8 619.7 747.3 614.0 744.3C608.3 741.3 603.2 736.6 599.0 733.0C594.8 729.4 595.2 728.0 589.0 722.5C582.8 717.0 571.0 707.5 562.0 700.0C553.0 692.5 547.4 688.0 535.0 677.5C522.6 667.0 503.3 650.4 487.5 636.8C471.7 623.2 458.8 611.6 440.0 596.0C421.2 580.4 396.7 560.6 375.0 542.9C353.3 525.2 331.2 507.0 310.0 489.8C288.8 472.6 268.7 456.3 248.0 439.6C227.3 422.9 206.7 406.1 186.0 389.4C165.3 372.7 144.4 355.8 124.0 339.4C103.5 323.0 75.3 300.2 63.3 290.9C51.3 281.6 53.2 287.2 52.0 283.5C50.8 279.8 53.6 273.3 56.2 268.5C58.9 263.7 63.7 258.3 67.9 254.7C72.1 251.1 77.2 248.4 81.4 246.7C85.6 245.0 89.2 244.1 93.0 244.5C96.8 244.9 100.0 246.5 104.0 249.2C108.0 251.9 106.9 251.9 117.0 260.5Z" fill="none" stroke="#2f3029" stroke-width="10.8" stroke-dasharray=".8 1.4" opacity=".22"/>
</g>
</g>
<g>
<clipPath id="clipb"><path d="M117.0 260.5C127.1 269.1 148.9 287.4 164.9 300.8C180.8 314.3 196.8 327.7 212.8 341.2C228.7 354.6 244.7 368.1 260.6 381.5C276.6 395.0 292.5 408.4 308.5 421.9C324.5 435.3 340.4 448.7 356.4 462.2C372.3 475.6 388.3 489.1 404.2 502.5C420.2 516.0 436.2 529.4 452.1 542.9C468.1 556.3 487.9 572.9 500.0 583.2C512.1 593.5 515.6 596.6 525.0 604.5C534.4 612.4 548.3 623.5 556.5 630.3C564.7 637.1 568.4 641.6 574.0 645.5C579.6 649.4 584.5 652.2 590.0 653.5C595.5 654.8 601.2 653.9 607.0 653.0C612.8 652.1 617.8 650.2 625.0 648.0C632.2 645.8 642.5 642.2 650.0 639.5C657.5 636.8 661.7 635.1 670.0 631.5C678.3 627.9 686.7 624.4 700.0 618.0C713.3 611.6 735.3 599.5 750.0 593.0C764.7 586.5 778.8 581.8 788.0 579.0C797.2 576.2 798.0 576.8 805.0 576.0C812.0 575.2 822.3 573.8 830.0 574.0C837.7 574.2 844.4 575.3 851.0 577.5C857.6 579.7 863.2 582.6 869.5 587.0C875.8 591.4 883.3 598.2 888.5 604.0C893.7 609.8 897.9 616.3 900.5 622.0C903.1 627.7 904.5 633.3 904.0 638.0C903.5 642.7 901.7 645.8 897.5 650.0C893.3 654.2 886.3 658.4 879.0 663.2C871.7 668.0 862.2 674.0 853.8 678.6C845.4 683.2 839.1 686.5 828.6 691.0C818.1 695.5 801.5 701.7 790.5 705.8C779.5 709.9 772.7 711.9 762.3 715.6C751.9 719.4 737.9 724.6 728.0 728.3C718.1 732.0 711.3 734.7 703.0 737.8C694.7 740.9 686.4 744.7 678.0 747.0C669.6 749.3 660.0 750.9 652.5 751.6C645.0 752.3 639.4 752.2 633.0 751.0C626.6 749.8 619.7 747.3 614.0 744.3C608.3 741.3 603.2 736.6 599.0 733.0C594.8 729.4 595.2 728.0 589.0 722.5C582.8 717.0 571.0 707.5 562.0 700.0C553.0 692.5 547.4 688.0 535.0 677.5C522.6 667.0 503.3 650.4 487.5 636.8C471.7 623.2 458.8 611.6 440.0 596.0C421.2 580.4 396.7 560.6 375.0 542.9C353.3 525.2 331.2 507.0 310.0 489.8C288.8 472.6 268.7 456.3 248.0 439.6C227.3 422.9 206.7 406.1 186.0 389.4C165.3 372.7 144.4 355.8 124.0 339.4C103.5 323.0 75.3 300.2 63.3 290.9C51.3 281.6 53.2 287.2 52.0 283.5C50.8 279.8 53.6 273.3 56.2 268.5C58.9 263.7 63.7 258.3 67.9 254.7C72.1 251.1 77.2 248.4 81.4 246.7C85.6 245.0 89.2 244.1 93.0 244.5C96.8 244.9 100.0 246.5 104.0 249.2C108.0 251.9 106.9 251.9 117.0 260.5Z"/></clipPath>
<clipPath id="ccapb"><path d="M50.0 284.5C48.9 283.9 40.2 279.9 38.5 278.0C36.8 276.1 33.7 269.0 33.2 266.0C32.7 263.0 33.0 251.2 33.8 248.0C34.6 244.8 38.9 236.2 41.5 233.5C44.1 230.8 57.1 223.2 60.0 221.5C62.9 219.8 67.9 217.0 70.0 216.8C72.1 216.6 78.9 218.5 81.0 219.8C83.1 221.1 89.5 227.5 91.0 229.5C92.5 231.5 95.0 238.2 96.0 240.0C97.0 241.8 100.5 246.3 101.0 247.0Z"/></clipPath>
<path d="M117.0 260.5C127.1 269.1 148.9 287.4 164.9 300.8C180.8 314.3 196.8 327.7 212.8 341.2C228.7 354.6 244.7 368.1 260.6 381.5C276.6 395.0 292.5 408.4 308.5 421.9C324.5 435.3 340.4 448.7 356.4 462.2C372.3 475.6 388.3 489.1 404.2 502.5C420.2 516.0 436.2 529.4 452.1 542.9C468.1 556.3 487.9 572.9 500.0 583.2C512.1 593.5 515.6 596.6 525.0 604.5C534.4 612.4 548.3 623.5 556.5 630.3C564.7 637.1 568.4 641.6 574.0 645.5C579.6 649.4 584.5 652.2 590.0 653.5C595.5 654.8 601.2 653.9 607.0 653.0C612.8 652.1 617.8 650.2 625.0 648.0C632.2 645.8 642.5 642.2 650.0 639.5C657.5 636.8 661.7 635.1 670.0 631.5C678.3 627.9 686.7 624.4 700.0 618.0C713.3 611.6 735.3 599.5 750.0 593.0C764.7 586.5 778.8 581.8 788.0 579.0C797.2 576.2 798.0 576.8 805.0 576.0C812.0 575.2 822.3 573.8 830.0 574.0C837.7 574.2 844.4 575.3 851.0 577.5C857.6 579.7 863.2 582.6 869.5 587.0C875.8 591.4 883.3 598.2 888.5 604.0C893.7 609.8 897.9 616.3 900.5 622.0C903.1 627.7 904.5 633.3 904.0 638.0C903.5 642.7 901.7 645.8 897.5 650.0C893.3 654.2 886.3 658.4 879.0 663.2C871.7 668.0 862.2 674.0 853.8 678.6C845.4 683.2 839.1 686.5 828.6 691.0C818.1 695.5 801.5 701.7 790.5 705.8C779.5 709.9 772.7 711.9 762.3 715.6C751.9 719.4 737.9 724.6 728.0 728.3C718.1 732.0 711.3 734.7 703.0 737.8C694.7 740.9 686.4 744.7 678.0 747.0C669.6 749.3 660.0 750.9 652.5 751.6C645.0 752.3 639.4 752.2 633.0 751.0C626.6 749.8 619.7 747.3 614.0 744.3C608.3 741.3 603.2 736.6 599.0 733.0C594.8 729.4 595.2 728.0 589.0 722.5C582.8 717.0 571.0 707.5 562.0 700.0C553.0 692.5 547.4 688.0 535.0 677.5C522.6 667.0 503.3 650.4 487.5 636.8C471.7 623.2 458.8 611.6 440.0 596.0C421.2 580.4 396.7 560.6 375.0 542.9C353.3 525.2 331.2 507.0 310.0 489.8C288.8 472.6 268.7 456.3 248.0 439.6C227.3 422.9 206.7 406.1 186.0 389.4C165.3 372.7 144.4 355.8 124.0 339.4C103.5 323.0 75.3 300.2 63.3 290.9C51.3 281.6 53.2 287.2 52.0 283.5C50.8 279.8 53.6 273.3 56.2 268.5C58.9 263.7 63.7 258.3 67.9 254.7C72.1 251.1 77.2 248.4 81.4 246.7C85.6 245.0 89.2 244.1 93.0 244.5C96.8 244.9 100.0 246.5 104.0 249.2C108.0 251.9 106.9 251.9 117.0 260.5Z" fill="url(#sand)"/>
<path d="M50.0 284.5C48.9 283.9 40.2 279.9 38.5 278.0C36.8 276.1 33.7 269.0 33.2 266.0C32.7 263.0 33.0 251.2 33.8 248.0C34.6 244.8 38.9 236.2 41.5 233.5C44.1 230.8 57.1 223.2 60.0 221.5C62.9 219.8 67.9 217.0 70.0 216.8C72.1 216.6 78.9 218.5 81.0 219.8C83.1 221.1 89.5 227.5 91.0 229.5C92.5 231.5 95.0 238.2 96.0 240.0C97.0 241.8 100.5 246.3 101.0 247.0Z" fill="#2f2fee"/>
<g clip-path="url(#clipb)">
<path d="M52.0 283.5L56.2 268.5L67.9 254.7L81.4 246.7L93.0 244.5L104.0 249.2L117.0 260.5L221.5 348.5L203.9 404.0L63.3 290.9Z" fill="#2f2fee"/>
<path d="M632.7 654.2L650.0 639.5L670.0 631.5L700.0 618.0L750.0 593.0L770.9 584.0L847.5 679.0L828.6 691.0L790.5 705.8L762.3 715.6L728.0 728.3L703.0 737.8L688.0 742.0Z" fill="#2f2fee"/>
<path d="M86.2 253.5L80.5 294.0" stroke="#5a5af5" stroke-width="7" opacity=".35" fill="none" filter="url(#b2)"/>
<path d="M108.2 261.5L101.2 308.0" stroke="#5a5af5" stroke-width="7" opacity=".35" fill="none" filter="url(#b2)"/>
<path d="M130.5 280.5L122.5 325.0" stroke="#5a5af5" stroke-width="7" opacity=".35" fill="none" filter="url(#b2)"/>
<path d="M152.0 299.0L146.0 344.0" stroke="#5a5af5" stroke-width="7" opacity=".35" fill="none" filter="url(#b2)"/>
<path d="M174.2 318.0L169.2 362.5" stroke="#5a5af5" stroke-width="7" opacity=".35" fill="none" filter="url(#b2)"/>
<path d="M196.8 338.0L188.0 377.5" stroke="#5a5af5" stroke-width="7" opacity=".35" fill="none" filter="url(#b2)"/>
<path d="M662.9 642.9L720.7 720.8L723.9 718.4L673.3 635.2Z" fill="#1a1aa8" opacity=".8" filter="url(#b0)"/>
<path d="M662.9 642.9L720.7 720.8L716.7 723.8L657.3 647.1Z" fill="#5a5af5" opacity=".45" filter="url(#b0)"/>
<path d="M677.9 640.4L763.4 708.2L765.9 705.1L686.0 630.2Z" fill="#1a1aa8" opacity=".8" filter="url(#b0)"/>
<path d="M677.9 640.4L763.4 708.2L760.3 712.1L673.6 645.9Z" fill="#5a5af5" opacity=".45" filter="url(#b0)"/>
<path d="M710.6 625.3L798.5 694.4L801.0 691.3L718.6 615.1Z" fill="#1a1aa8" opacity=".8" filter="url(#b0)"/>
<path d="M710.6 625.3L798.5 694.4L795.4 698.3L706.3 630.8Z" fill="#5a5af5" opacity=".45" filter="url(#b0)"/>
<path d="M740.8 611.5L813.6 688.1L816.5 685.3L750.2 602.5Z" fill="#1a1aa8" opacity=".8" filter="url(#b0)"/>
<path d="M740.8 611.5L813.6 688.1L810.0 691.5L735.7 616.3Z" fill="#5a5af5" opacity=".45" filter="url(#b0)"/>
<path d="M632.7 654.2L688.0 731.0L689.6 729.8L637.6 650.7Z" fill="#1a1aa8" opacity=".5"/>
<path d="M52.0 283.5L56.2 268.5L67.9 254.7L81.4 246.7L93.0 244.5L104.0 249.2L117.0 260.5L221.5 348.5L203.9 404.0L63.3 290.9Z" fill="url(#stb)" opacity=".5"/>
<path d="M632.7 654.2L650.0 639.5L670.0 631.5L700.0 618.0L750.0 593.0L770.9 584.0L847.5 679.0L828.6 691.0L790.5 705.8L762.3 715.6L728.0 728.3L703.0 737.8L688.0 742.0Z" fill="url(#stbb)" opacity=".4"/>
<path d="M52.0 283.5L56.2 268.5L67.9 254.7L81.4 246.7L93.0 244.5L104.0 249.2L117.0 260.5L221.5 348.5L203.9 404.0L63.3 290.9Z" fill="#fff" filter="url(#speck)" opacity=".55"/>
<path d="M632.7 654.2L650.0 639.5L670.0 631.5L700.0 618.0L750.0 593.0L770.9 584.0L847.5 679.0L828.6 691.0L790.5 705.8L762.3 715.6L728.0 728.3L703.0 737.8L688.0 742.0Z" fill="#fff" filter="url(#speck)" opacity=".55"/>
<g stroke="#55564a" stroke-width="3.2" fill="none" stroke-linecap="round">
<path d="M75.5 255L70 288" stroke-width="5.4"/>
<path d="M75.5 255L70 288" stroke-width="1.6" stroke="#8a8b74" stroke-dasharray="2.5 2" stroke-linecap="butt"/>
<path d="M97 252L91 300" stroke-width="5.4"/>
<path d="M97 252L91 300" stroke-width="1.6" stroke="#8a8b74" stroke-dasharray="2.5 2" stroke-linecap="butt"/>
<path d="M119.5 271L111.5 316" stroke-width="5.4"/>
<path d="M119.5 271L111.5 316" stroke-width="1.6" stroke="#8a8b74" stroke-dasharray="2.5 2" stroke-linecap="butt"/>
<path d="M141.5 290L133.5 334" stroke-width="5.4"/>
<path d="M141.5 290L133.5 334" stroke-width="1.6" stroke="#8a8b74" stroke-dasharray="2.5 2" stroke-linecap="butt"/>
<path d="M162.5 308L158.5 354" stroke-width="5.4"/>
<path d="M162.5 308L158.5 354" stroke-width="1.6" stroke="#8a8b74" stroke-dasharray="2.5 2" stroke-linecap="butt"/>
<path d="M186 328L180 371" stroke-width="5.4"/>
<path d="M186 328L180 371" stroke-width="1.6" stroke="#8a8b74" stroke-dasharray="2.5 2" stroke-linecap="butt"/>
<path d="M207.5 348L196 384" stroke-width="5.4"/>
<path d="M207.5 348L196 384" stroke-width="1.6" stroke="#8a8b74" stroke-dasharray="2.5 2" stroke-linecap="butt"/>
<path d="M662.9 642.9L720.7 720.8" stroke-width="3.8"/>
<path d="M662.9 642.9L720.7 720.8" stroke-width="1.3" stroke="#8a8b74" stroke-dasharray="2.5 2" stroke-linecap="butt"/>
<path d="M677.9 640.4L763.4 708.2" stroke-width="3.8"/>
<path d="M677.9 640.4L763.4 708.2" stroke-width="1.3" stroke="#8a8b74" stroke-dasharray="2.5 2" stroke-linecap="butt"/>
<path d="M710.6 625.3L798.5 694.4" stroke-width="3.8"/>
<path d="M710.6 625.3L798.5 694.4" stroke-width="1.3" stroke="#8a8b74" stroke-dasharray="2.5 2" stroke-linecap="butt"/>
<path d="M740.8 611.5L813.6 688.1" stroke-width="3.8"/>
<path d="M740.8 611.5L813.6 688.1" stroke-width="1.3" stroke="#8a8b74" stroke-dasharray="2.5 2" stroke-linecap="butt"/>
<path d="M221.5 361.3L203.9 390.2" stroke-width="2.4" stroke-dasharray="3 1.2" stroke-linecap="butt"/>
<path d="M777.5 592L845 674" stroke-width="4.6" stroke="#45463d"/>
<path d="M777.5 592L845 674" stroke-width="1.2" stroke="#7d7e70" stroke-dasharray="2.5 2" stroke-linecap="butt"/>
<path d="M630.5 655.5L687 735" stroke-width="2.2" stroke-dasharray="3.5 1.2" stroke-linecap="butt"/>
<path d="M634.5 652.5L692 733" stroke-width="2.2" stroke-dasharray="3.5 1.2" stroke-linecap="butt"/>
<path d="M790.0 591.0C793.0 590.2 801.3 587.6 808.0 586.5C814.7 585.4 824.0 583.5 830.2 584.5C836.4 585.5 839.0 588.3 845.3 592.6C851.6 596.9 861.4 604.8 867.9 610.2C874.4 615.7 880.0 621.1 884.2 625.3C888.4 629.5 891.4 632.7 893.0 635.3C894.6 637.9 893.5 640.0 893.6 641.0" stroke-width="2.2" stroke-dasharray="3 1.6" stroke-linecap="butt"/>
<path d="M806 610L835 599" stroke-width="2.2" stroke-dasharray="3 1.6" stroke-linecap="butt"/>
<path d="M842 654L884 637" stroke-width="2.2" stroke-dasharray="3 1.6" stroke-linecap="butt"/>
<path d="M588 665C600 672 625 678 650 676" stroke-width="2.2" stroke-dasharray="3 1.6" stroke-linecap="butt"/>
<path d="M600 700L628 722" stroke-width="2.2" stroke-dasharray="3 1.6" stroke-linecap="butt"/>
<path d="M606 664C620 666 640 666 652 661" stroke-width="2.2" stroke-dasharray="3 1.6" stroke-linecap="butt"/>
</g>
<path d="M203.9 404.0C187.0 390.4 81.5 305.4 63.3 290.9C45.1 276.4 52.9 286.2 52.0 283.5C51.1 280.8 54.3 272.0 56.2 268.5C58.1 265.0 64.9 257.3 67.9 254.7C70.9 252.1 78.4 247.9 81.4 246.7C84.4 245.5 90.3 244.2 93.0 244.5C95.7 244.8 101.1 247.3 104.0 249.2C106.9 251.1 102.9 248.6 117.0 260.5C131.1 272.4 209.0 337.9 221.5 348.5" fill="none" stroke="#57584c" stroke-width="26" stroke-dasharray="5 1" opacity=".95"/>
<path d="M117.0 260.5C127.1 269.1 148.9 287.4 164.9 300.8C180.8 314.3 196.8 327.7 212.8 341.2C228.7 354.6 244.7 368.1 260.6 381.5C276.6 395.0 292.5 408.4 308.5 421.9C324.5 435.3 340.4 448.7 356.4 462.2C372.3 475.6 388.3 489.1 404.2 502.5C420.2 516.0 436.2 529.4 452.1 542.9C468.1 556.3 487.9 572.9 500.0 583.2C512.1 593.5 515.6 596.6 525.0 604.5C534.4 612.4 548.3 623.5 556.5 630.3C564.7 637.1 568.4 641.6 574.0 645.5C579.6 649.4 584.5 652.2 590.0 653.5C595.5 654.8 601.2 653.9 607.0 653.0C612.8 652.1 617.8 650.2 625.0 648.0C632.2 645.8 642.5 642.2 650.0 639.5C657.5 636.8 661.7 635.1 670.0 631.5C678.3 627.9 686.7 624.4 700.0 618.0C713.3 611.6 735.3 599.5 750.0 593.0C764.7 586.5 778.8 581.8 788.0 579.0C797.2 576.2 798.0 576.8 805.0 576.0C812.0 575.2 822.3 573.8 830.0 574.0C837.7 574.2 844.4 575.3 851.0 577.5C857.6 579.7 863.2 582.6 869.5 587.0C875.8 591.4 883.3 598.2 888.5 604.0C893.7 609.8 897.9 616.3 900.5 622.0C903.1 627.7 904.5 633.3 904.0 638.0C903.5 642.7 901.7 645.8 897.5 650.0C893.3 654.2 886.3 658.4 879.0 663.2C871.7 668.0 862.2 674.0 853.8 678.6C845.4 683.2 839.1 686.5 828.6 691.0C818.1 695.5 801.5 701.7 790.5 705.8C779.5 709.9 772.7 711.9 762.3 715.6C751.9 719.4 737.9 724.6 728.0 728.3C718.1 732.0 711.3 734.7 703.0 737.8C694.7 740.9 686.4 744.7 678.0 747.0C669.6 749.3 660.0 750.9 652.5 751.6C645.0 752.3 639.4 752.2 633.0 751.0C626.6 749.8 619.7 747.3 614.0 744.3C608.3 741.3 603.2 736.6 599.0 733.0C594.8 729.4 595.2 728.0 589.0 722.5C582.8 717.0 571.0 707.5 562.0 700.0C553.0 692.5 547.4 688.0 535.0 677.5C522.6 667.0 503.3 650.4 487.5 636.8C471.7 623.2 458.8 611.6 440.0 596.0C421.2 580.4 396.7 560.6 375.0 542.9C353.3 525.2 331.2 507.0 310.0 489.8C288.8 472.6 268.7 456.3 248.0 439.6C227.3 422.9 206.7 406.1 186.0 389.4C165.3 372.7 144.4 355.8 124.0 339.4C103.5 323.0 75.3 300.2 63.3 290.9C51.3 281.6 53.2 287.2 52.0 283.5C50.8 279.8 53.6 273.3 56.2 268.5C58.9 263.7 63.7 258.3 67.9 254.7C72.1 251.1 77.2 248.4 81.4 246.7C85.6 245.0 89.2 244.1 93.0 244.5C96.8 244.9 100.0 246.5 104.0 249.2C108.0 251.9 106.9 251.9 117.0 260.5Z" fill="none" stroke="#55564a" stroke-width="19.4" stroke-dasharray="3.6 1.1" opacity=".85"/>
<path d="M117.0 260.5C127.1 269.1 148.9 287.4 164.9 300.8C180.8 314.3 196.8 327.7 212.8 341.2C228.7 354.6 244.7 368.1 260.6 381.5C276.6 395.0 292.5 408.4 308.5 421.9C324.5 435.3 340.4 448.7 356.4 462.2C372.3 475.6 388.3 489.1 404.2 502.5C420.2 516.0 436.2 529.4 452.1 542.9C468.1 556.3 487.9 572.9 500.0 583.2C512.1 593.5 515.6 596.6 525.0 604.5C534.4 612.4 548.3 623.5 556.5 630.3C564.7 637.1 568.4 641.6 574.0 645.5C579.6 649.4 584.5 652.2 590.0 653.5C595.5 654.8 601.2 653.9 607.0 653.0C612.8 652.1 617.8 650.2 625.0 648.0C632.2 645.8 642.5 642.2 650.0 639.5C657.5 636.8 661.7 635.1 670.0 631.5C678.3 627.9 686.7 624.4 700.0 618.0C713.3 611.6 735.3 599.5 750.0 593.0C764.7 586.5 778.8 581.8 788.0 579.0C797.2 576.2 798.0 576.8 805.0 576.0C812.0 575.2 822.3 573.8 830.0 574.0C837.7 574.2 844.4 575.3 851.0 577.5C857.6 579.7 863.2 582.6 869.5 587.0C875.8 591.4 883.3 598.2 888.5 604.0C893.7 609.8 897.9 616.3 900.5 622.0C903.1 627.7 904.5 633.3 904.0 638.0C903.5 642.7 901.7 645.8 897.5 650.0C893.3 654.2 886.3 658.4 879.0 663.2C871.7 668.0 862.2 674.0 853.8 678.6C845.4 683.2 839.1 686.5 828.6 691.0C818.1 695.5 801.5 701.7 790.5 705.8C779.5 709.9 772.7 711.9 762.3 715.6C751.9 719.4 737.9 724.6 728.0 728.3C718.1 732.0 711.3 734.7 703.0 737.8C694.7 740.9 686.4 744.7 678.0 747.0C669.6 749.3 660.0 750.9 652.5 751.6C645.0 752.3 639.4 752.2 633.0 751.0C626.6 749.8 619.7 747.3 614.0 744.3C608.3 741.3 603.2 736.6 599.0 733.0C594.8 729.4 595.2 728.0 589.0 722.5C582.8 717.0 571.0 707.5 562.0 700.0C553.0 692.5 547.4 688.0 535.0 677.5C522.6 667.0 503.3 650.4 487.5 636.8C471.7 623.2 458.8 611.6 440.0 596.0C421.2 580.4 396.7 560.6 375.0 542.9C353.3 525.2 331.2 507.0 310.0 489.8C288.8 472.6 268.7 456.3 248.0 439.6C227.3 422.9 206.7 406.1 186.0 389.4C165.3 372.7 144.4 355.8 124.0 339.4C103.5 323.0 75.3 300.2 63.3 290.9C51.3 281.6 53.2 287.2 52.0 283.5C50.8 279.8 53.6 273.3 56.2 268.5C58.9 263.7 63.7 258.3 67.9 254.7C72.1 251.1 77.2 248.4 81.4 246.7C85.6 245.0 89.2 244.1 93.0 244.5C96.8 244.9 100.0 246.5 104.0 249.2C108.0 251.9 106.9 251.9 117.0 260.5Z" fill="none" stroke="#4f5046" stroke-width="14.4"/>
<path d="M212.0 411.5C218.0 416.2 231.7 426.6 248.0 439.6C264.3 452.7 288.8 472.6 310.0 489.8C331.2 507.0 353.3 525.2 375.0 542.9C396.7 560.6 421.2 580.4 440.0 596.0C458.8 611.6 471.7 623.2 487.5 636.8C503.3 650.4 522.6 667.0 535.0 677.5C547.4 688.0 553.0 692.5 562.0 700.0C571.0 707.5 584.5 718.8 589.0 722.5" fill="none" stroke="#4f5046" stroke-width="15.8"/>
</g>
<g clip-path="url(#ccapb)"><path d="M50.0 284.5C48.9 283.9 40.2 279.9 38.5 278.0C36.8 276.1 33.7 269.0 33.2 266.0C32.7 263.0 33.0 251.2 33.8 248.0C34.6 244.8 38.9 236.2 41.5 233.5C44.1 230.8 57.1 223.2 60.0 221.5C62.9 219.8 67.9 217.0 70.0 216.8C72.1 216.6 78.9 218.5 81.0 219.8C83.1 221.1 89.5 227.5 91.0 229.5C92.5 231.5 95.0 238.2 96.0 240.0C97.0 241.8 100.5 246.3 101.0 247.0Z" fill="#fff" filter="url(#speck)" opacity=".4"/>
<path d="M44 246L50 252M50 239L56 245M57 233L63 239M65 228L70 234" stroke="#55564a" stroke-width="2.6" stroke-linecap="round" opacity=".85"/></g>
<path d="M50.0 284.5C48.9 283.9 40.2 279.9 38.5 278.0C36.8 276.1 33.7 269.0 33.2 266.0C32.7 263.0 33.0 251.2 33.8 248.0C34.6 244.8 38.9 236.2 41.5 233.5C44.1 230.8 57.1 223.2 60.0 221.5C62.9 219.8 67.9 217.0 70.0 216.8C72.1 216.6 78.9 218.5 81.0 219.8C83.1 221.1 89.5 227.5 91.0 229.5C92.5 231.5 95.0 238.2 96.0 240.0C97.0 241.8 100.5 246.3 101.0 247.0" fill="none" stroke="#4f5046" stroke-width="11.8" stroke-linejoin="round" stroke-linecap="round"/>
<path d="M117.0 260.5C127.1 269.1 148.9 287.4 164.9 300.8C180.8 314.3 196.8 327.7 212.8 341.2C228.7 354.6 244.7 368.1 260.6 381.5C276.6 395.0 292.5 408.4 308.5 421.9C324.5 435.3 340.4 448.7 356.4 462.2C372.3 475.6 388.3 489.1 404.2 502.5C420.2 516.0 436.2 529.4 452.1 542.9C468.1 556.3 487.9 572.9 500.0 583.2C512.1 593.5 515.6 596.6 525.0 604.5C534.4 612.4 548.3 623.5 556.5 630.3C564.7 637.1 568.4 641.6 574.0 645.5C579.6 649.4 584.5 652.2 590.0 653.5C595.5 654.8 601.2 653.9 607.0 653.0C612.8 652.1 617.8 650.2 625.0 648.0C632.2 645.8 642.5 642.2 650.0 639.5C657.5 636.8 661.7 635.1 670.0 631.5C678.3 627.9 686.7 624.4 700.0 618.0C713.3 611.6 735.3 599.5 750.0 593.0C764.7 586.5 778.8 581.8 788.0 579.0C797.2 576.2 798.0 576.8 805.0 576.0C812.0 575.2 822.3 573.8 830.0 574.0C837.7 574.2 844.4 575.3 851.0 577.5C857.6 579.7 863.2 582.6 869.5 587.0C875.8 591.4 883.3 598.2 888.5 604.0C893.7 609.8 897.9 616.3 900.5 622.0C903.1 627.7 904.5 633.3 904.0 638.0C903.5 642.7 901.7 645.8 897.5 650.0C893.3 654.2 886.3 658.4 879.0 663.2C871.7 668.0 862.2 674.0 853.8 678.6C845.4 683.2 839.1 686.5 828.6 691.0C818.1 695.5 801.5 701.7 790.5 705.8C779.5 709.9 772.7 711.9 762.3 715.6C751.9 719.4 737.9 724.6 728.0 728.3C718.1 732.0 711.3 734.7 703.0 737.8C694.7 740.9 686.4 744.7 678.0 747.0C669.6 749.3 660.0 750.9 652.5 751.6C645.0 752.3 639.4 752.2 633.0 751.0C626.6 749.8 619.7 747.3 614.0 744.3C608.3 741.3 603.2 736.6 599.0 733.0C594.8 729.4 595.2 728.0 589.0 722.5C582.8 717.0 571.0 707.5 562.0 700.0C553.0 692.5 547.4 688.0 535.0 677.5C522.6 667.0 503.3 650.4 487.5 636.8C471.7 623.2 458.8 611.6 440.0 596.0C421.2 580.4 396.7 560.6 375.0 542.9C353.3 525.2 331.2 507.0 310.0 489.8C288.8 472.6 268.7 456.3 248.0 439.6C227.3 422.9 206.7 406.1 186.0 389.4C165.3 372.7 144.4 355.8 124.0 339.4C103.5 323.0 75.3 300.2 63.3 290.9C51.3 281.6 53.2 287.2 52.0 283.5C50.8 279.8 53.6 273.3 56.2 268.5C58.9 263.7 63.7 258.3 67.9 254.7C72.1 251.1 77.2 248.4 81.4 246.7C85.6 245.0 89.2 244.1 93.0 244.5C96.8 244.9 100.0 246.5 104.0 249.2C108.0 251.9 106.9 251.9 117.0 260.5Z" fill="none" stroke="#4f5046" stroke-width="11.8" stroke-linejoin="round" stroke-linecap="round"/>
<path d="M50.0 284.5C48.9 283.9 40.2 279.9 38.5 278.0C36.8 276.1 33.7 269.0 33.2 266.0C32.7 263.0 33.0 251.2 33.8 248.0C34.6 244.8 38.9 236.2 41.5 233.5C44.1 230.8 57.1 223.2 60.0 221.5C62.9 219.8 67.9 217.0 70.0 216.8C72.1 216.6 78.9 218.5 81.0 219.8C83.1 221.1 89.5 227.5 91.0 229.5C92.5 231.5 95.0 238.2 96.0 240.0C97.0 241.8 100.5 246.3 101.0 247.0" fill="none" stroke="#737468" stroke-width="4.5" stroke-linejoin="round" stroke-linecap="round" opacity=".75" filter="url(#b1)"/>
<path d="M50.0 284.5C48.9 283.9 40.2 279.9 38.5 278.0C36.8 276.1 33.7 269.0 33.2 266.0C32.7 263.0 33.0 251.2 33.8 248.0C34.6 244.8 38.9 236.2 41.5 233.5C44.1 230.8 57.1 223.2 60.0 221.5C62.9 219.8 67.9 217.0 70.0 216.8C72.1 216.6 78.9 218.5 81.0 219.8C83.1 221.1 89.5 227.5 91.0 229.5C92.5 231.5 95.0 238.2 96.0 240.0C97.0 241.8 100.5 246.3 101.0 247.0" fill="none" stroke="#2f3029" stroke-width="10.8" stroke-dasharray=".8 1.4" opacity=".22"/>
<path d="M117.0 260.5C127.1 269.1 148.9 287.4 164.9 300.8C180.8 314.3 196.8 327.7 212.8 341.2C228.7 354.6 244.7 368.1 260.6 381.5C276.6 395.0 292.5 408.4 308.5 421.9C324.5 435.3 340.4 448.7 356.4 462.2C372.3 475.6 388.3 489.1 404.2 502.5C420.2 516.0 436.2 529.4 452.1 542.9C468.1 556.3 487.9 572.9 500.0 583.2C512.1 593.5 515.6 596.6 525.0 604.5C534.4 612.4 548.3 623.5 556.5 630.3C564.7 637.1 568.4 641.6 574.0 645.5C579.6 649.4 584.5 652.2 590.0 653.5C595.5 654.8 601.2 653.9 607.0 653.0C612.8 652.1 617.8 650.2 625.0 648.0C632.2 645.8 642.5 642.2 650.0 639.5C657.5 636.8 661.7 635.1 670.0 631.5C678.3 627.9 686.7 624.4 700.0 618.0C713.3 611.6 735.3 599.5 750.0 593.0C764.7 586.5 778.8 581.8 788.0 579.0C797.2 576.2 798.0 576.8 805.0 576.0C812.0 575.2 822.3 573.8 830.0 574.0C837.7 574.2 844.4 575.3 851.0 577.5C857.6 579.7 863.2 582.6 869.5 587.0C875.8 591.4 883.3 598.2 888.5 604.0C893.7 609.8 897.9 616.3 900.5 622.0C903.1 627.7 904.5 633.3 904.0 638.0C903.5 642.7 901.7 645.8 897.5 650.0C893.3 654.2 886.3 658.4 879.0 663.2C871.7 668.0 862.2 674.0 853.8 678.6C845.4 683.2 839.1 686.5 828.6 691.0C818.1 695.5 801.5 701.7 790.5 705.8C779.5 709.9 772.7 711.9 762.3 715.6C751.9 719.4 737.9 724.6 728.0 728.3C718.1 732.0 711.3 734.7 703.0 737.8C694.7 740.9 686.4 744.7 678.0 747.0C669.6 749.3 660.0 750.9 652.5 751.6C645.0 752.3 639.4 752.2 633.0 751.0C626.6 749.8 619.7 747.3 614.0 744.3C608.3 741.3 603.2 736.6 599.0 733.0C594.8 729.4 595.2 728.0 589.0 722.5C582.8 717.0 571.0 707.5 562.0 700.0C553.0 692.5 547.4 688.0 535.0 677.5C522.6 667.0 503.3 650.4 487.5 636.8C471.7 623.2 458.8 611.6 440.0 596.0C421.2 580.4 396.7 560.6 375.0 542.9C353.3 525.2 331.2 507.0 310.0 489.8C288.8 472.6 268.7 456.3 248.0 439.6C227.3 422.9 206.7 406.1 186.0 389.4C165.3 372.7 144.4 355.8 124.0 339.4C103.5 323.0 75.3 300.2 63.3 290.9C51.3 281.6 53.2 287.2 52.0 283.5C50.8 279.8 53.6 273.3 56.2 268.5C58.9 263.7 63.7 258.3 67.9 254.7C72.1 251.1 77.2 248.4 81.4 246.7C85.6 245.0 89.2 244.1 93.0 244.5C96.8 244.9 100.0 246.5 104.0 249.2C108.0 251.9 106.9 251.9 117.0 260.5Z" fill="none" stroke="#737468" stroke-width="4.5" stroke-linejoin="round" stroke-linecap="round" opacity=".75" filter="url(#b1)"/>
<path d="M117.0 260.5C127.1 269.1 148.9 287.4 164.9 300.8C180.8 314.3 196.8 327.7 212.8 341.2C228.7 354.6 244.7 368.1 260.6 381.5C276.6 395.0 292.5 408.4 308.5 421.9C324.5 435.3 340.4 448.7 356.4 462.2C372.3 475.6 388.3 489.1 404.2 502.5C420.2 516.0 436.2 529.4 452.1 542.9C468.1 556.3 487.9 572.9 500.0 583.2C512.1 593.5 515.6 596.6 525.0 604.5C534.4 612.4 548.3 623.5 556.5 630.3C564.7 637.1 568.4 641.6 574.0 645.5C579.6 649.4 584.5 652.2 590.0 653.5C595.5 654.8 601.2 653.9 607.0 653.0C612.8 652.1 617.8 650.2 625.0 648.0C632.2 645.8 642.5 642.2 650.0 639.5C657.5 636.8 661.7 635.1 670.0 631.5C678.3 627.9 686.7 624.4 700.0 618.0C713.3 611.6 735.3 599.5 750.0 593.0C764.7 586.5 778.8 581.8 788.0 579.0C797.2 576.2 798.0 576.8 805.0 576.0C812.0 575.2 822.3 573.8 830.0 574.0C837.7 574.2 844.4 575.3 851.0 577.5C857.6 579.7 863.2 582.6 869.5 587.0C875.8 591.4 883.3 598.2 888.5 604.0C893.7 609.8 897.9 616.3 900.5 622.0C903.1 627.7 904.5 633.3 904.0 638.0C903.5 642.7 901.7 645.8 897.5 650.0C893.3 654.2 886.3 658.4 879.0 663.2C871.7 668.0 862.2 674.0 853.8 678.6C845.4 683.2 839.1 686.5 828.6 691.0C818.1 695.5 801.5 701.7 790.5 705.8C779.5 709.9 772.7 711.9 762.3 715.6C751.9 719.4 737.9 724.6 728.0 728.3C718.1 732.0 711.3 734.7 703.0 737.8C694.7 740.9 686.4 744.7 678.0 747.0C669.6 749.3 660.0 750.9 652.5 751.6C645.0 752.3 639.4 752.2 633.0 751.0C626.6 749.8 619.7 747.3 614.0 744.3C608.3 741.3 603.2 736.6 599.0 733.0C594.8 729.4 595.2 728.0 589.0 722.5C582.8 717.0 571.0 707.5 562.0 700.0C553.0 692.5 547.4 688.0 535.0 677.5C522.6 667.0 503.3 650.4 487.5 636.8C471.7 623.2 458.8 611.6 440.0 596.0C421.2 580.4 396.7 560.6 375.0 542.9C353.3 525.2 331.2 507.0 310.0 489.8C288.8 472.6 268.7 456.3 248.0 439.6C227.3 422.9 206.7 406.1 186.0 389.4C165.3 372.7 144.4 355.8 124.0 339.4C103.5 323.0 75.3 300.2 63.3 290.9C51.3 281.6 53.2 287.2 52.0 283.5C50.8 279.8 53.6 273.3 56.2 268.5C58.9 263.7 63.7 258.3 67.9 254.7C72.1 251.1 77.2 248.4 81.4 246.7C85.6 245.0 89.2 244.1 93.0 244.5C96.8 244.9 100.0 246.5 104.0 249.2C108.0 251.9 106.9 251.9 117.0 260.5Z" fill="none" stroke="#2f3029" stroke-width="10.8" stroke-dasharray=".8 1.4" opacity=".22"/>
</g>
<path d="M464.6 392.9C471.0 391.8 485.1 391.0 494.3 392.9C503.5 394.8 511.4 400.4 520.0 404.1C528.6 407.9 536.7 411.4 545.8 415.4C554.9 419.4 567.7 423.4 574.7 428.2C581.7 433.0 584.9 438.4 587.6 444.3C590.3 450.2 591.3 456.6 590.8 463.6C590.2 470.6 587.0 480.2 584.3 486.1C581.6 492.0 581.2 496.9 574.7 499.0C568.2 501.1 552.0 499.0 545.0 498.5C538.0 498.0 539.2 498.7 532.9 495.8C526.6 492.9 516.3 486.4 507.2 481.3C498.1 476.2 487.0 470.3 478.2 465.2C469.4 460.1 460.5 455.8 454.1 450.7C447.7 445.6 440.7 440.6 439.6 434.7C438.5 428.8 445.0 421.3 447.7 415.4C450.4 409.5 452.9 403.1 455.7 399.3C458.5 395.6 458.2 394.0 464.6 392.9Z" fill="url(#pk2)" filter="url(#rough)"/>
<path d="M470.2 404.1C472.4 403.6 477.8 402.4 483.1 403.3C488.5 404.2 495.1 407.4 502.3 409.7C509.5 412.0 518.5 414.2 526.5 417.0C534.5 419.8 543.1 422.9 550.6 426.6C558.1 430.4 567.1 435.8 571.5 439.5C575.9 443.2 576.6 446.7 577.1 449.1C577.6 451.5 577.8 453.1 574.7 454.0C571.6 454.9 565.6 454.8 558.6 454.5C551.6 454.2 541.2 454.8 533.0 452.5C524.8 450.2 516.7 445.2 509.5 441.0C502.3 436.8 495.8 431.5 490.0 427.0C484.2 422.5 477.8 417.4 474.5 414.0C471.2 410.6 470.9 408.1 470.2 406.5C469.5 404.9 468.0 404.6 470.2 404.1Z" fill="url(#pk)" filter="url(#b0)"/>
</svg>
<svg class="bc" width="256" height="47" viewBox="1040 362 256 47" shape-rendering="crispEdges"><g fill="#0b0610"><rect x="1040" y="362" width="1" height="31"/><rect x="1044" y="362" width="1" height="31"/><rect x="1046" y="362" width="3" height="31"/><rect x="1050" y="362" width="3" height="31"/><rect x="1054" y="362" width="1" height="31"/><rect x="1057" y="362" width="3" height="31"/><rect x="1061" y="362" width="1" height="31"/><rect x="1063" y="362" width="1" height="31"/><rect x="1067" y="362" width="3" height="31"/><rect x="1071" y="362" width="1" height="31"/><rect x="1072" y="362" width="3" height="31"/><rect x="1076" y="362" width="1" height="31"/><rect x="1078" y="362" width="3" height="31"/><rect x="1082" y="362" width="1" height="31"/><rect x="1086" y="362" width="1" height="31"/><rect x="1088" y="362" width="3" height="31"/><rect x="1092" y="362" width="3" height="31"/><rect x="1096" y="362" width="1" height="31"/><rect x="1100" y="362" width="1" height="31"/><rect x="1102" y="362" width="1" height="31"/><rect x="1105" y="362" width="3" height="31"/><rect x="1109" y="362" width="1" height="31"/><rect x="1111" y="362" width="1" height="31"/><rect x="1113" y="362" width="1" height="31"/><rect x="1117" y="362" width="3" height="31"/><rect x="1120" y="362" width="3" height="31"/><rect x="1124" y="362" width="1" height="31"/><rect x="1126" y="362" width="3" height="31"/><rect x="1132" y="362" width="1" height="31"/><rect x="1134" y="362" width="1" height="31"/><rect x="1136" y="362" width="3" height="31"/><rect x="1142" y="362" width="1" height="31"/><rect x="1144" y="362" width="3" height="31"/><rect x="1148" y="362" width="1" height="31"/><rect x="1150" y="362" width="1" height="31"/><rect x="1153" y="362" width="1" height="31"/><rect x="1157" y="362" width="3" height="31"/><rect x="1161" y="362" width="1" height="31"/><rect x="1163" y="362" width="3" height="31"/><rect x="1167" y="362" width="1" height="31"/><rect x="1169" y="362" width="1" height="31"/><rect x="1171" y="362" width="3" height="31"/><rect x="1175" y="362" width="1" height="31"/><rect x="1177" y="362" width="3" height="31"/><rect x="1183" y="362" width="1" height="31"/><rect x="1185" y="362" width="1" height="31"/><rect x="1187" y="362" width="1" height="31"/><rect x="1189" y="362" width="3" height="31"/><rect x="1193" y="362" width="3" height="31"/><rect x="1199" y="362" width="1" height="31"/><rect x="1201" y="362" width="1" height="31"/><rect x="1203" y="362" width="3" height="31"/><rect x="1207" y="362" width="1" height="31"/><rect x="1211" y="362" width="3" height="31"/><rect x="1215" y="362" width="1" height="31"/><rect x="1217" y="362" width="3" height="31"/><rect x="1221" y="362" width="3" height="31"/><rect x="1225" y="362" width="1" height="31"/><rect x="1229" y="362" width="1" height="31"/><rect x="1231" y="362" width="1" height="31"/><rect x="1233" y="362" width="3" height="31"/><rect x="1237" y="362" width="1" height="31"/><rect x="1239" y="362" width="1" height="31"/><rect x="1241" y="362" width="1" height="31"/><rect x="1245" y="362" width="3" height="31"/><rect x="1249" y="362" width="1" height="31"/><rect x="1251" y="362" width="3" height="31"/><rect x="1255" y="362" width="1" height="31"/><rect x="1257" y="362" width="3" height="31"/><rect x="1263" y="362" width="1" height="31"/><rect x="1265" y="362" width="1" height="31"/><rect x="1269" y="362" width="3" height="31"/><rect x="1273" y="362" width="1" height="31"/><rect x="1275" y="362" width="3" height="31"/><rect x="1279" y="362" width="1" height="31"/><rect x="1281" y="362" width="1" height="31"/><rect x="1285" y="362" width="3" height="31"/><rect x="1289" y="362" width="1" height="31"/><rect x="1291" y="362" width="3" height="31"/><rect x="1295" y="362" width="1" height="31"/><rect x="1040" y="393" width="1" height="16"/><rect x="1042" y="393" width="1" height="16"/><rect x="1046" y="393" width="3" height="16"/><rect x="1050" y="393" width="3" height="16"/><rect x="1054" y="393" width="1" height="16"/><rect x="1057" y="393" width="3" height="16"/><rect x="1061" y="393" width="1" height="16"/><rect x="1065" y="393" width="3" height="16"/><rect x="1069" y="393" width="1" height="16"/><rect x="1071" y="393" width="1" height="16"/><rect x="1072" y="393" width="1" height="16"/><rect x="1074" y="393" width="1" height="16"/><rect x="1078" y="393" width="3" height="16"/><rect x="1082" y="393" width="3" height="16"/><rect x="1086" y="393" width="1" height="16"/><rect x="1088" y="393" width="3" height="16"/><rect x="1092" y="393" width="3" height="16"/><rect x="1098" y="393" width="1" height="16"/><rect x="1100" y="393" width="1" height="16"/><rect x="1102" y="393" width="1" height="16"/><rect x="1105" y="393" width="1" height="16"/><rect x="1107" y="393" width="3" height="16"/><rect x="1113" y="393" width="1" height="16"/><rect x="1115" y="393" width="1" height="16"/><rect x="1117" y="393" width="3" height="16"/><rect x="1120" y="393" width="1" height="16"/><rect x="1122" y="393" width="1" height="16"/><rect x="1126" y="393" width="3" height="16"/><rect x="1130" y="393" width="3" height="16"/><rect x="1134" y="393" width="1" height="16"/><rect x="1136" y="393" width="1" height="16"/><rect x="1138" y="393" width="3" height="16"/><rect x="1144" y="393" width="1" height="16"/><rect x="1146" y="393" width="1" height="16"/><rect x="1148" y="393" width="3" height="16"/><rect x="1153" y="393" width="3" height="16"/><rect x="1157" y="393" width="1" height="16"/><rect x="1161" y="393" width="3" height="16"/><rect x="1165" y="393" width="1" height="16"/><rect x="1167" y="393" width="1" height="16"/><rect x="1169" y="393" width="1" height="16"/><rect x="1173" y="393" width="3" height="16"/><rect x="1177" y="393" width="1" height="16"/><rect x="1179" y="393" width="3" height="16"/><rect x="1183" y="393" width="1" height="16"/><rect x="1185" y="393" width="3" height="16"/><rect x="1189" y="393" width="1" height="16"/><rect x="1193" y="393" width="3" height="16"/><rect x="1197" y="393" width="1" height="16"/><rect x="1199" y="393" width="1" height="16"/><rect x="1201" y="393" width="1" height="16"/><rect x="1205" y="393" width="3" height="16"/><rect x="1209" y="393" width="1" height="16"/><rect x="1211" y="393" width="3" height="16"/><rect x="1215" y="393" width="1" height="16"/><rect x="1217" y="393" width="1" height="16"/><rect x="1219" y="393" width="3" height="16"/><rect x="1223" y="393" width="1" height="16"/><rect x="1227" y="393" width="3" height="16"/><rect x="1231" y="393" width="1" height="16"/><rect x="1233" y="393" width="1" height="16"/><rect x="1235" y="393" width="1" height="16"/><rect x="1237" y="393" width="3" height="16"/><rect x="1241" y="393" width="1" height="16"/><rect x="1245" y="393" width="3" height="16"/><rect x="1249" y="393" width="3" height="16"/><rect x="1253" y="393" width="3" height="16"/><rect x="1257" y="393" width="1" height="16"/><rect x="1261" y="393" width="1" height="16"/><rect x="1263" y="393" width="1" height="16"/><rect x="1265" y="393" width="3" height="16"/><rect x="1269" y="393" width="1" height="16"/><rect x="1271" y="393" width="1" height="16"/><rect x="1275" y="393" width="3" height="16"/><rect x="1279" y="393" width="1" height="16"/><rect x="1281" y="393" width="1" height="16"/><rect x="1285" y="393" width="1" height="16"/><rect x="1287" y="393" width="3" height="16"/><rect x="1291" y="393" width="3" height="16"/><rect x="1295" y="393" width="1" height="16"/></g></svg>
<div class="t " style="left:1040.0px;top:47.4px">Stitches:</div><div class="t " style="left:1194.0px;top:47.4px">12025</div><div class="t " style="left:1040.0px;top:63.0px">Colors:</div><div class="t " style="left:1194.0px;top:63.0px">6</div><div class="t " style="left:1040.0px;top:78.7px">Color changes:</div><div class="t " style="left:1194.0px;top:78.7px">5</div><div class="t " style="left:1040.0px;top:94.3px">Stops:</div><div class="t " style="left:1194.0px;top:94.3px">7</div><div class="t " style="left:1040.0px;top:125.7px">Machine:</div><div class="t " style="left:1194.0px;top:125.7px">Tajima</div><div class="t " style="left:1040.0px;top:141.3px">Trims:</div><div class="t " style="left:1194.0px;top:141.3px">8</div><div class="t " style="left:1040.0px;top:172.6px">Left:</div><div class="t " style="left:1194.0px;top:172.6px">62.7 mm</div><div class="t " style="left:1040.0px;top:188.2px">Right:</div><div class="t " style="left:1194.0px;top:188.2px">62.7 mm</div><div class="t " style="left:1040.0px;top:203.9px">Up:</div><div class="t " style="left:1194.0px;top:203.9px">34.3 mm</div><div class="t " style="left:1040.0px;top:219.6px">Down:</div><div class="t " style="left:1194.0px;top:219.6px">34.3 mm</div><div class="t " style="left:1040.0px;top:250.9px">EndX:</div><div class="t " style="left:1194.0px;top:250.9px">0.0 mm</div><div class="t " style="left:1040.0px;top:266.5px">EndY:</div><div class="t " style="left:1194.0px;top:266.5px">0.0 mm</div><div class="t " style="left:1040.0px;top:297.8px">Max Stitch:</div><div class="t " style="left:1194.0px;top:297.8px">7.0 mm</div><div class="t " style="left:1040.0px;top:313.4px">Min Stitch:</div><div class="t " style="left:1194.0px;top:313.4px">0.2 mm</div><div class="t " style="left:1040.0px;top:329.1px">Max Jump:</div><div class="t " style="left:1194.0px;top:329.1px">7.0 mm</div><div class="t " style="left:1040.0px;top:407.3px">Colorway:</div><div class="t " style="left:1194.0px;top:407.3px">Colorway 1</div><div class="t h" style="left:1040.0px;top:438.6px">#</div><div class="t h" style="left:1077.0px;top:438.6px">N#</div><div class="t h" style="left:1161.5px;top:438.6px">St.</div><div class="t h" style="left:1206.0px;top:438.6px">Descr_Code</div><div class="t " style="left:1040.0px;top:469.9px">1.</div><div class="t " style="left:1076.0px;top:469.9px">5</div><div class="sw" style="left:1111px;top:471.4px;background:#de1c20"></div><div class="t " style="right:161.0px;top:469.9px">1426</div><div class="t " style="left:1201.0px;top:469.9px">Red 5</div><div class="t " style="left:1040.0px;top:501.2px">2.</div><div class="t " style="left:1076.0px;top:501.2px">1</div><div class="sw" style="left:1111px;top:502.8px;background:#0000f5"></div><div class="t " style="right:161.0px;top:501.2px">1435</div><div class="t " style="left:1201.0px;top:501.2px">Blue 1</div><div class="t " style="left:1040.0px;top:532.6px">3.</div><div class="t " style="left:1076.0px;top:532.6px">50</div><div class="sw" style="left:1111px;top:534.1px;background:#f6c892"></div><div class="t " style="right:161.0px;top:532.6px">3017</div><div class="t " style="left:1201.0px;top:532.6px">Sand 50</div><div class="t " style="left:1040.0px;top:563.9px">4.</div><div class="t " style="left:1076.0px;top:563.9px">50</div><div class="sw" style="left:1111px;top:565.4px;background:#f6c892"></div><div class="t " style="right:161.0px;top:563.9px">1</div><div class="t " style="left:1201.0px;top:563.9px">Sand,Stop</div><div class="t " style="left:1040.0px;top:579.5px">5.</div><div class="t " style="left:1076.0px;top:579.5px">35</div><div class="sw" style="left:1111px;top:581.0px;background:#55524b"></div><div class="t " style="right:161.0px;top:579.5px">5593</div><div class="t " style="left:1201.0px;top:579.5px">Murky Green 35</div><div class="t " style="left:1040.0px;top:610.8px">6.</div><div class="t " style="left:1076.0px;top:610.8px">13</div><div class="sw" style="left:1111px;top:612.3px;background:#231f20"></div><div class="t " style="right:161.0px;top:610.8px">450</div><div class="t " style="left:1201.0px;top:610.8px">Black 13</div><div class="t " style="left:1040.0px;top:642.1px">7.</div><div class="t " style="left:1076.0px;top:642.1px">14</div><div class="sw" style="left:1111px;top:643.6px;background:#8a8a8a"></div><div class="t " style="right:161.0px;top:642.1px">101</div><div class="t " style="left:1201.0px;top:642.1px">Grey 14</div><div class="mk" style="left:1059px;top:488px;width:7px"></div><div class="mk" style="left:1090px;top:488px;width:1px"></div><div class="mk" style="left:1100px;top:488px;width:2px"></div><div class="mk" style="left:1106px;top:488px;width:2px"></div><div class="mk" style="left:1111px;top:488px;width:3px"></div><div class="mk" style="left:1115px;top:488px;width:1px"></div><div class="mk" style="left:1117px;top:488px;width:1px"></div><div class="mk" style="left:1059px;top:597px;width:1px;height:10px;background:#f1e7a3"></div><div class="t " style="left:1040.0px;top:673.4px">Total Bobbin:</div><div class="t " style="left:1198.0px;top:673.4px">23.87m</div>
</body></html>
